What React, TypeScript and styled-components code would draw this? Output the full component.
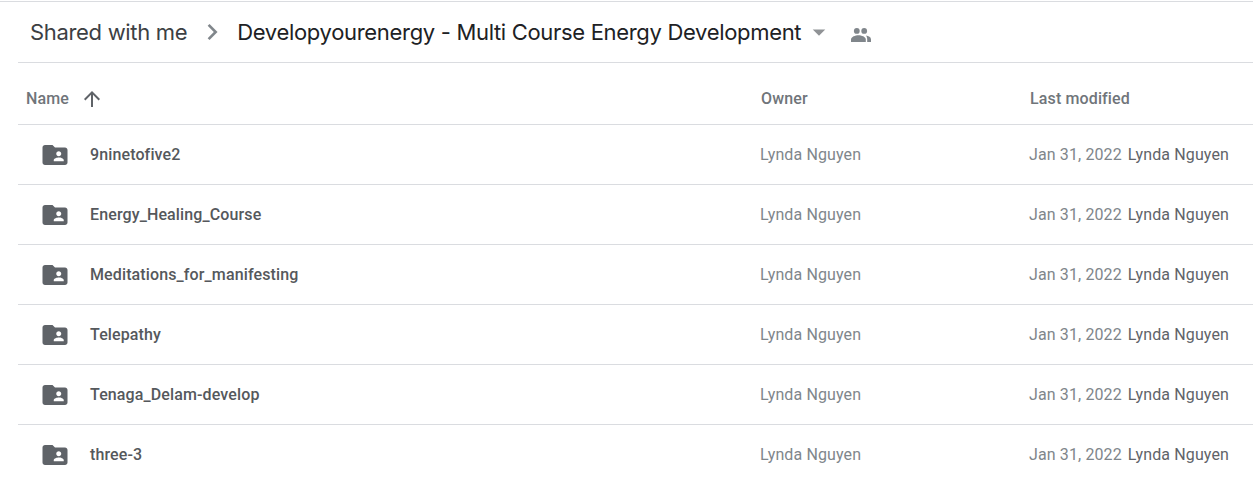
import React from "react";
import styled, { createGlobalStyle } from "styled-components";

const Global = createGlobalStyle`
  html, body { margin: 0; padding: 0; background: #fff; }
  body { font-family: Roboto, "Liberation Sans", sans-serif; overflow: hidden; }
`;

const Page = styled.div`
  width: 1253px;
  height: 479px;
  overflow: hidden;
  border-top: 1px solid #dadce0;
  margin-top: 1px;
  padding-left: 18px;
  box-sizing: border-box;
`;

const Breadcrumb = styled.div`
  height: 60px;
  display: flex;
  align-items: center;
  padding-left: 12px;
  border-bottom: 1px solid #dadce0;
`;

const Crumb = styled.span<{ $current?: boolean }>`
  font-family: Inter, Roboto, sans-serif;
  font-size: 22px;
  letter-spacing: -0.32px;
  line-height: 28px;
  color: ${(p) => (p.$current ? "#202124" : "#3c4043")};
  white-space: nowrap;
`;

const Chevron = styled.svg`
  width: 32px;
  height: 32px;
  margin: 0 8px 0 10px;
  fill: #80868b;
  flex: none;
`;

const Caret = styled.svg`
  width: 30px;
  height: 30px;
  margin-left: 3px;
  fill: #909396;
  flex: none;
`;

const People = styled.svg`
  width: 20px;
  height: 14px;
  margin-left: 17px;
  margin-top: 6px;
  fill: #80868b;
  flex: none;
`;

const Columns = `
  display: grid;
  grid-template-columns: 743px 269px 1fr;
`;

const HeaderRow = styled.div`
  ${Columns}
  height: 62px;
  padding-top: 10px;
  box-sizing: border-box;
  align-items: center;
  border-bottom: 1px solid #dadce0;
  font-size: 16px;
  letter-spacing: 0.13px;
  font-weight: 500;
  color: #70757a;
`;

const NameHead = styled.div`
  display: flex;
  align-items: center;
  padding-left: 8px;
  gap: 11px;
`;

const Arrow = styled.svg`
  width: 24px;
  height: 24px;
  fill: #5f6368;
`;

const Row = styled.div`
  ${Columns}
  height: 59px;
  align-items: center;
  border-bottom: 1px solid #dadce0;
  font-size: 16px;
  letter-spacing: 0.12px;
`;

const NameCell = styled.div`
  display: flex;
  align-items: center;
  padding-left: 22px;
  gap: 20px;
  font-weight: 500;
  color: #55585c;
`;

const FolderIcon = styled.svg`
  width: 30px;
  height: 30px;
  fill: #5f6368;
  flex: none;
`;

const OwnerCell = styled.div`
  color: #80868b;
  font-weight: 400;
  margin-left: -1px;
`;

const ModifiedCell = styled.div`
  display: flex;
  gap: 6px;
  margin-left: -1px;
  white-space: nowrap;
`;

const DateText = styled.span`
  color: #80868b;
`;

const ByText = styled.span`
  color: #5f6368;
`;

const names = [
  "9ninetofive2",
  "Energy_Healing_Course",
  "Meditations_for_manifesting",
  "Telepathy",
  "Tenaga_Delam-develop",
  "three-3",
];

export default function App() {
  return (
    <>
      <Global />
      <Page>
        <Breadcrumb>
          <Crumb>Shared with me</Crumb>
          <Chevron viewBox="0 0 24 24">
            <path d="M9.4 18 8 16.6 12.6 12 8 7.4 9.4 6l6 6z" />
          </Chevron>
          <Crumb $current>Developyourenergy - Multi Course Energy Development</Crumb>
          <Caret viewBox="0 0 24 24">
            <path d="M7 10l5 5 5-5z" />
          </Caret>
          <People viewBox="0 0 20 14">
            <circle cx="5.8" cy="2.9" r="2.9" />
            <circle cx="13.2" cy="2.9" r="2.9" />
            <path d="M0 14v-2.6C0 8.8 4.4 7.2 7.4 7.2s7.4 1.6 7.4 4.2V14z" />
            <path d="M15 7.6c2.6.4 5 1.6 5 3.8V14h-3.8v-2.6c0-1.6-.5-2.8-1.2-3.8z" />
          </People>
        </Breadcrumb>
        <HeaderRow>
          <NameHead>
            Name
            <Arrow viewBox="0 0 24 24">
              <path d="M4 12l1.41 1.41L11 7.83V20h2V7.83l5.58 5.59L20 12l-8-8-8 8z" />
            </Arrow>
          </NameHead>
          <div>Owner</div>
          <div>Last modified</div>
        </HeaderRow>
        {names.map((n) => (
          <Row key={n}>
            <NameCell>
              <FolderIcon viewBox="0 0 24 24">
                <path d="M20 6h-8l-2-2H4c-1.1 0-2 .9-2 2v12c0 1.1.9 2 2 2h16c1.1 0 2-.9 2-2V8c0-1.1-.9-2-2-2zm-5 3c1.1 0 2 .9 2 2s-.9 2-2 2-2-.9-2-2 .9-2 2-2zm4 8h-8v-1c0-1.33 2.67-2 4-2s4 .67 4 2v1z" />
              </FolderIcon>
              {n}
            </NameCell>
            <OwnerCell>Lynda Nguyen</OwnerCell>
            <ModifiedCell>
              <DateText>Jan 31, 2022</DateText>
              <ByText>Lynda Nguyen</ByText>
            </ModifiedCell>
          </Row>
        ))}
      </Page>
    </>
  );
}
